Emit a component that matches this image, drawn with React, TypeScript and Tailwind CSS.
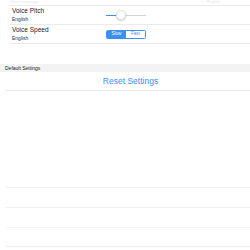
const font = { fontFamily: '"Liberation Sans", Arial, sans-serif' };

function Row({ title, sub, children }: { title: string; sub: string; children: React.ReactNode }) {
  return (
    <div className="flex h-[19px] items-center border-b border-[#ebebeb] pl-[2px]">
      <div className="flex w-[94px] flex-col leading-none">
        <span className="text-[6.5px] text-[#222]">{title}</span>
        <span className="mt-[3px] text-[5px] text-[#333]">{sub}</span>
      </div>
      {children}
    </div>
  );
}

function Slider() {
  return (
    <div className="relative h-[10px] w-[40px]">
      <div className="absolute left-0 top-[4.5px] h-px w-[12px] bg-[#3d8ff2]" />
      <div className="absolute left-[12px] right-0 top-[4.5px] h-px bg-[#d4d4d4]" />
      <div className="absolute left-[10px] top-0 h-[10px] w-[10px] rounded-full border border-[#e0e0e0] bg-white shadow-[0_1px_2px_rgba(0,0,0,0.2)]" />
    </div>
  );
}

function Segmented() {
  return (
    <div className="flex h-[9px] w-[40px] overflow-hidden rounded-[1.5px] border border-[#3d8ff2] text-[4.5px] leading-none">
      <div className="flex flex-1 items-center justify-center bg-[#3d8ff2] text-white">Slow</div>
      <div className="flex flex-1 items-center justify-center bg-white text-[#3d8ff2]">Fast</div>
    </div>
  );
}

export default function App() {
  return (
    <div className="h-[250px] w-[250px] overflow-hidden bg-white" style={font}>
      <div className="ml-[10px]">
        <div className="flex h-[6px] items-start justify-between border-b border-[#ebebeb] pr-[30px] text-[4px] leading-none text-[#e6e6e6]">
          <span>Voice Language</span>
          <span>English</span>
        </div>
        <Row title="Voice Pitch" sub="English">
          <Slider />
        </Row>
        <Row title="Voice Speed" sub="English">
          <Segmented />
        </Row>
      </div>
      <div className="h-[20px]" />
      <div className="flex h-[8px] items-center bg-[#f3f3f3] pl-[5px] text-[5px] font-medium leading-none text-[#222]">
        Default Settings
      </div>
      <div className="ml-[5px] flex h-[19px] items-center justify-center border-b border-[#ebebeb] pl-[6px] text-[8.5px] leading-none text-[#3d8ff2]">
        Reset Settings
      </div>
      <div className="h-[96px]" />
      <div className="ml-[5px] flex flex-col">
        <div className="h-[20px] border-t border-[#f0f0f0]" />
        <div className="h-[20px] border-t border-[#f0f0f0]" />
        <div className="h-[19px] border-t border-[#f6f6f6]" />
        <div className="h-[19px] border-t border-[#f0f0f0]" />
      </div>
    </div>
  );
}
